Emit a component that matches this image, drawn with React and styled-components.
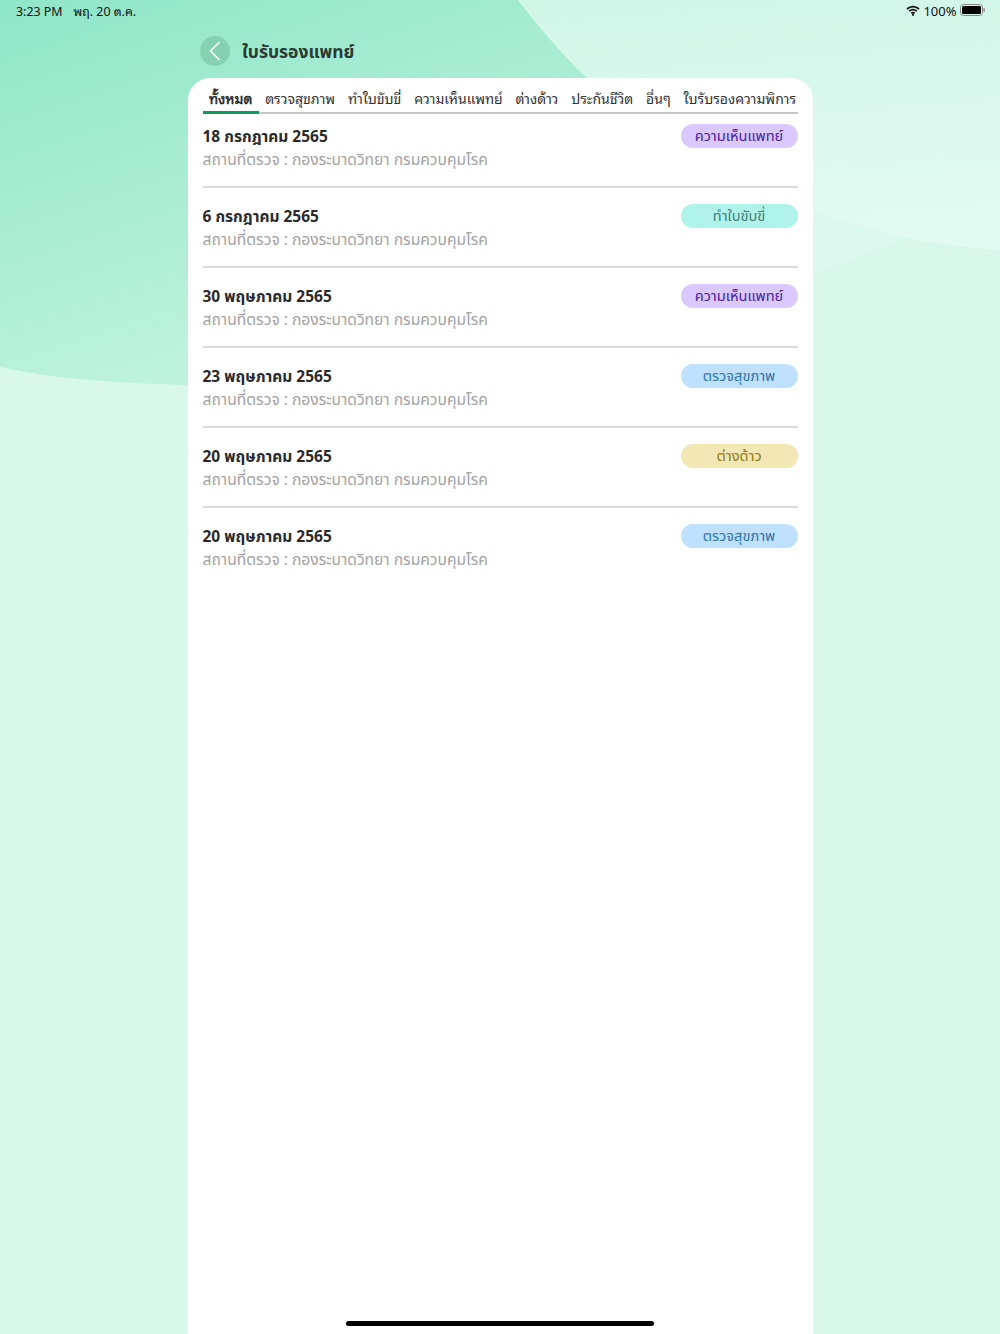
import React from "react";
import styled, { createGlobalStyle } from "styled-components";

const FONT = `"Noto Sans Thai", "Noto Sans", "Open Sans", sans-serif`;
const LOOPED = `"Noto Sans Thai Looped", "Noto Serif Thai", "Thonburi", "Loma", "Garuda", "Norasi", "Tahoma", "Liberation Sans", sans-serif`;

const Global = createGlobalStyle`
  html, body { margin: 0; padding: 0; }
  body { font-family: ${FONT}; background: #d7f8ea; }
`;

const Screen = styled.div`
  position: relative;
  width: 1000px;
  height: 1334px;
  overflow: hidden;
  background: #d7f8ea;
  display: flex;
  flex-direction: column;
`;

const Backdrop = styled.svg`
  position: absolute;
  inset: 0;
`;

const StatusBar = styled.div`
  position: relative;
  height: 24px;
  padding: 0 15px 4px 16px;
  box-sizing: border-box;
  display: flex;
  align-items: center;
  justify-content: space-between;
  font-family: ${LOOPED};
  color: #111;
`;

const StatusGroup = styled.div`
  display: flex;
  align-items: center;
  gap: ${(p) => p.$gap}px;
  font-size: ${(p) => p.$size}px;
`;

const Header = styled.header`
  position: relative;
  height: 54px;
  padding: 0 0 0 200px;
  display: flex;
  align-items: center;
  gap: 12px;
`;

const BackButton = styled.button`
  width: 30px;
  height: 30px;
  border: 0;
  padding: 0;
  border-radius: 50%;
  background: #85d2b3;
  display: flex;
  align-items: center;
  justify-content: center;
`;

const Title = styled.h1`
  margin: 0;
  padding-top: 2px;
  font-size: 17.5px;
  font-weight: 700;
  color: #2b3a35;
`;

const Card = styled.main`
  position: relative;
  flex: 1;
  width: 625px;
  margin-left: 187.5px;
  padding: 0 15px;
  box-sizing: border-box;
  background: #fff;
  border-radius: 22px 22px 0 0;
`;

const Tabs = styled.nav`
  height: 36px;
  display: flex;
  align-items: stretch;
  border-bottom: 2px solid #c8c8c8;
  box-sizing: border-box;
`;

const Tab = styled.div`
  padding: 5px 6.4px 0;
  margin-bottom: -2px;
  display: flex;
  align-items: center;
  font-family: ${LOOPED};
  font-size: 14px;
  white-space: nowrap;
  color: ${(p) => (p.$active ? "#222" : "#333")};
  -webkit-text-stroke: ${(p) => (p.$active ? "0.45px #222" : "0")};
  border-bottom: 3px solid ${(p) => (p.$active ? "#0f9a63" : "transparent")};
`;

const List = styled.section`
  padding-top: 10px;
`;

const Row = styled.article`
  height: 64px;
  margin-bottom: 16px;
  box-sizing: border-box;
  display: flex;
  justify-content: space-between;
  align-items: flex-start;
  border-bottom: ${(p) => (p.$last ? "none" : "2px solid #dadada")};
`;

const RowText = styled.div`
  padding-top: 3px;
  display: flex;
  flex-direction: column;
`;

const DateText = styled.div`
  font-size: 15.5px;
  line-height: 22px;
  font-weight: 700;
  color: #2a2a2a;
`;

const Place = styled.div`
  font-size: 15.6px;
  line-height: 22px;
  color: #a3a3a3;
`;

const PALETTE = {
  doctor: ["#d9c9ff", "#4a22a8"],
  drive: ["#b0f3eb", "#3f7f78"],
  health: ["#bfe1ff", "#2f74ad"],
  foreign: ["#f3e8b5", "#8f7a16"],
};

const Badge = styled.span`
  width: 117px;
  height: 24px;
  padding-top: 1px;
  box-sizing: border-box;
  border-radius: 12px;
  display: flex;
  align-items: center;
  justify-content: center;
  font-size: 14.6px;
  background: ${(p) => PALETTE[p.$kind][0]};
  color: ${(p) => PALETTE[p.$kind][1]};
`;

const HomeBar = styled.div`
  position: absolute;
  left: 346px;
  bottom: 8px;
  width: 308px;
  height: 5px;
  border-radius: 3px;
  background: #000;
`;

const tabs = ["ทั้งหมด", "ตรวจสุขภาพ", "ทำใบขับขี่", "ความเห็นแพทย์", "ต่างด้าว", "ประกันชีวิต", "อื่นๆ", "ใบรับรองความพิการ"];

const rows = [
  ["18 กรกฎาคม 2565", "ความเห็นแพทย์", "doctor"],
  ["6 กรกฎาคม 2565", "ทำใบขับขี่", "drive"],
  ["30 พฤษภาคม 2565", "ความเห็นแพทย์", "doctor"],
  ["23 พฤษภาคม 2565", "ตรวจสุขภาพ", "health"],
  ["20 พฤษภาคม 2565", "ต่างด้าว", "foreign"],
  ["20 พฤษภาคม 2565", "ตรวจสุขภาพ", "health"],
];

export default function App() {
  return (
    <Screen>
      <Global />
      <Backdrop width="1000" height="1334" viewBox="0 0 1000 1334">
        <defs>
          <linearGradient id="g" x1="0" y1="0" x2="0.6" y2="1">
            <stop offset="0" stopColor="#8fe6c8" />
            <stop offset="1" stopColor="#c8f5e1" />
          </linearGradient>
          <linearGradient id="r" x1="0" y1="0" x2="0.15" y2="1">
            <stop offset="0" stopColor="#d0f6e8" />
            <stop offset="1" stopColor="#e2faf2" />
          </linearGradient>
        </defs>
        <path d="M520 0H1000V250C960 247 930 243 905 238C870 228 840 220 813 212H700Z" fill="url(#r)" />
        <path d="M813 212L905 238L813 275Z" fill="#dcf9ef" />
        <path d="M0 0H518C545 35 565 57 587 78C640 130 680 190 700 240C500 380 300 388 187 385C110 383 50 378 0 367Z" fill="url(#g)" />
      </Backdrop>
      <StatusBar>
        <StatusGroup $gap={11} $size={12.4}>
          <span>3:23 PM</span>
          <span>พฤ. 20 ต.ค.</span>
        </StatusGroup>
        <StatusGroup $gap={3.5} $size={13}>
          <svg width="14" height="11" viewBox="0 0 14 11">
            <path d="M1 4a9 9 0 0 1 12 0M3.200 6.200a6 6 0 0 1 7.600 0M5.300 8.300a3 3 0 0 1 3.400 0" fill="none" stroke="#111" strokeWidth="1.700" />
            <circle cx="7" cy="9.800" r="1.100" fill="#111" />
          </svg>
          <span>100%</span>
          <svg width="25" height="12" viewBox="0 0 25 12">
            <rect x="0.500" y="0.500" width="22" height="11" rx="3" fill="none" stroke="#888" />
            <rect x="2" y="2" width="19" height="8" rx="1.500" fill="#000" />
            <rect x="23.500" y="4" width="1.300" height="4" rx="0.600" fill="#888" />
          </svg>
        </StatusGroup>
      </StatusBar>
      <Header>
        <BackButton aria-label="back">
          <svg width="14" height="20" viewBox="0 0 14 20">
            <path d="M11.500 1L2.500 10L11.500 19" fill="none" stroke="#fff" strokeWidth="1.600" />
          </svg>
        </BackButton>
        <Title>ใบรับรองแพทย์</Title>
      </Header>
      <Card>
        <Tabs>
          {tabs.map((t, i) => (
            <Tab key={t} $active={i === 0}>{t}</Tab>
          ))}
        </Tabs>
        <List>
          {rows.map(([d, b, k], i) => (
            <Row key={i} $last={i === rows.length - 1}>
              <RowText>
                <DateText>{d}</DateText>
                <Place>สถานที่ตรวจ : กองระบาดวิทยา กรมควบคุมโรค</Place>
              </RowText>
              <Badge $kind={k}>{b}</Badge>
            </Row>
          ))}
        </List>
      </Card>
      <HomeBar />
    </Screen>
  );
}
